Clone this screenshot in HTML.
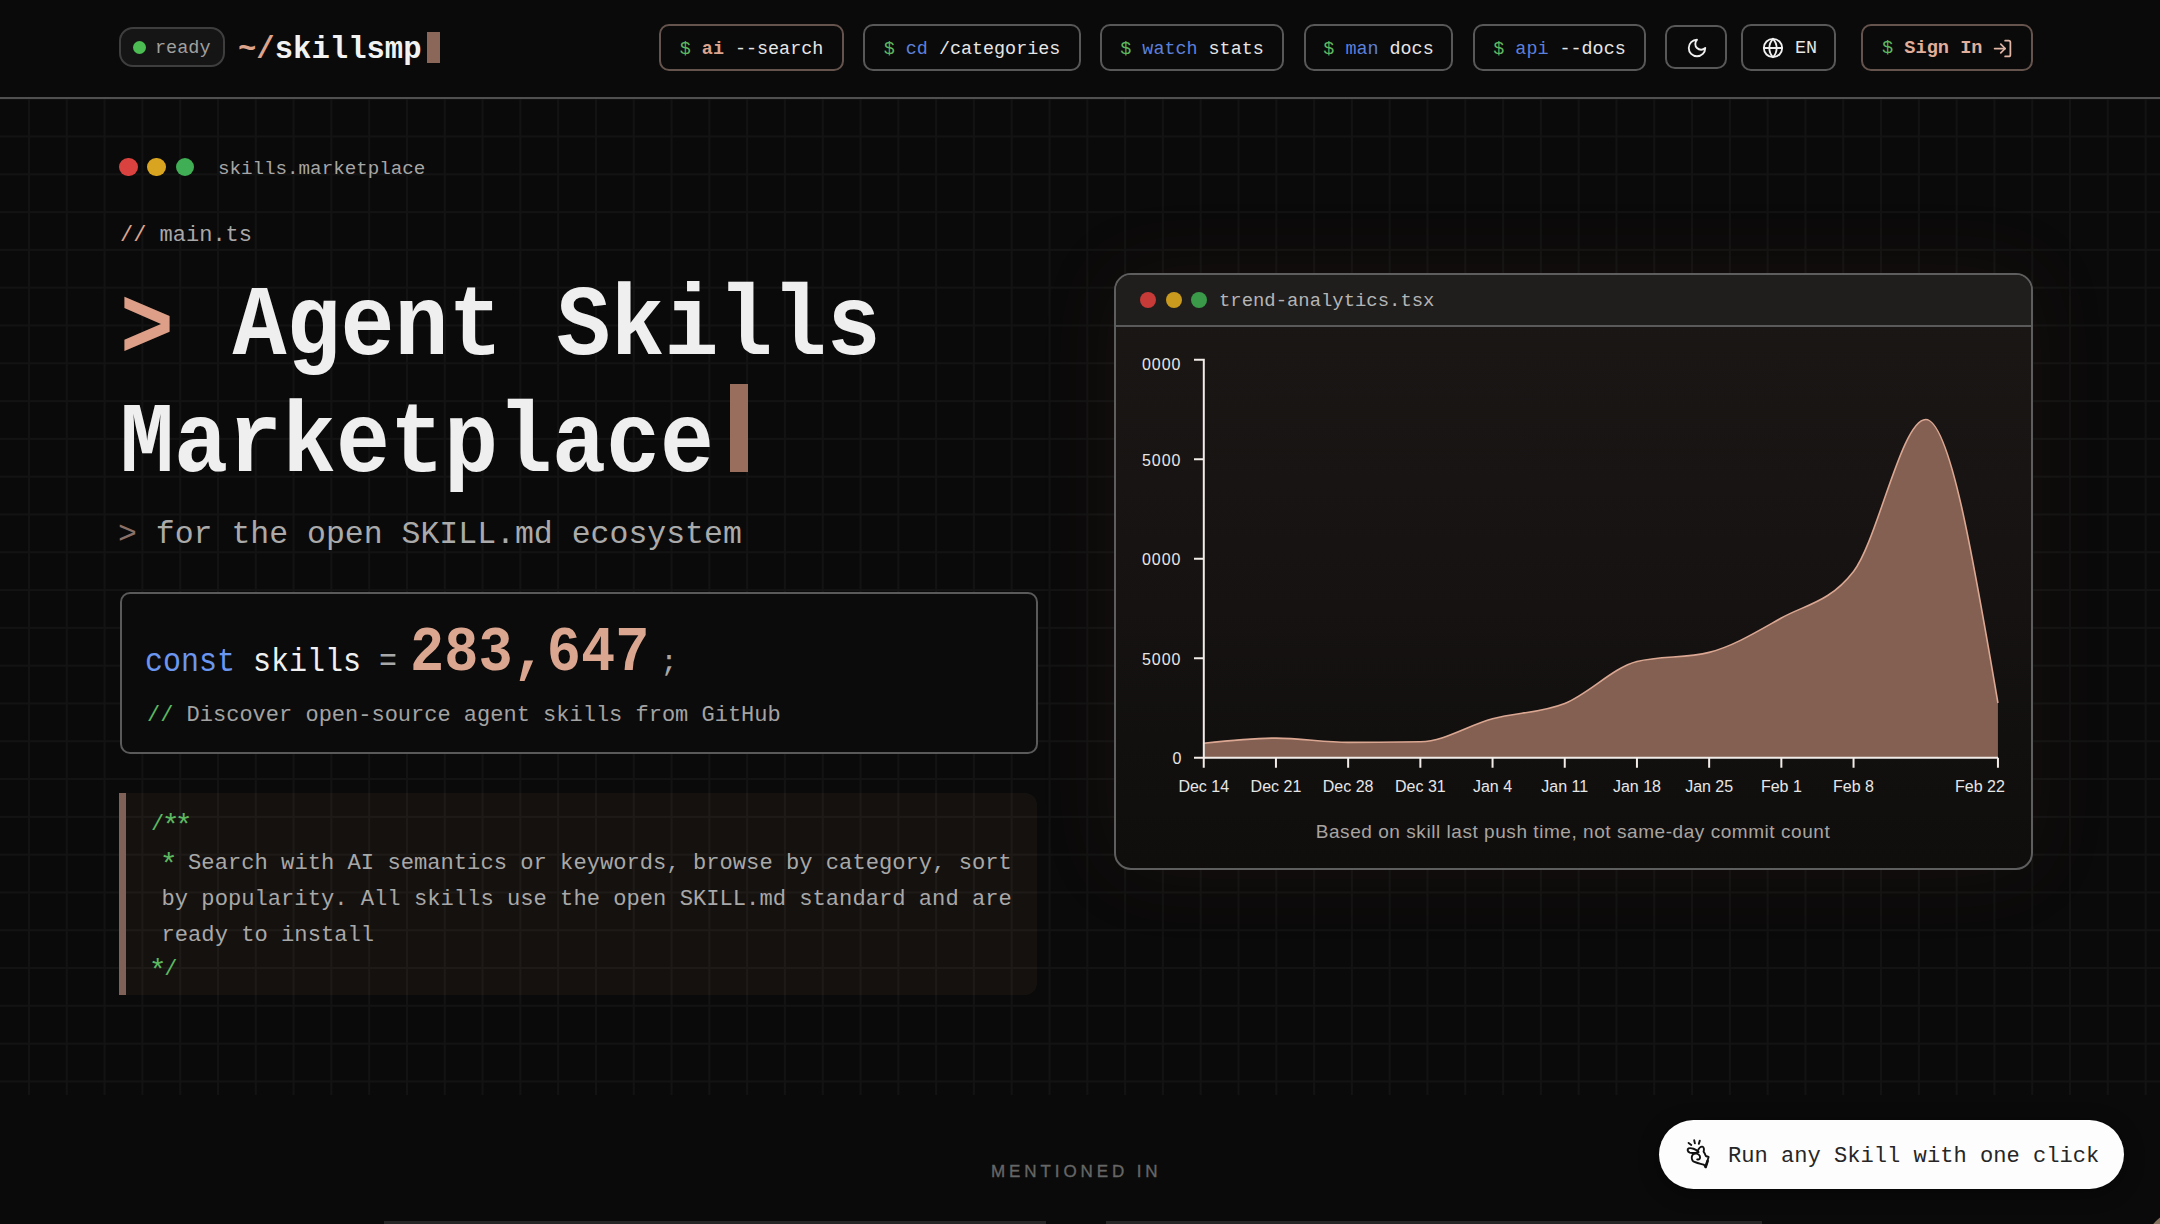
<!DOCTYPE html>
<html><head><meta charset="utf-8">
<style>
*{box-sizing:border-box;margin:0;padding:0}
html,body{width:2160px;height:1224px;overflow:hidden;background:#0b0a0a}
body{position:relative;font-family:"Liberation Mono",monospace;color:#eee}
.a{position:absolute;white-space:pre;line-height:1}
.sans{font-family:"Liberation Sans",sans-serif}
#grid{position:absolute;left:0;top:98px;width:2160px;height:997px;
 background-image:linear-gradient(to right,#131313 0,#131313 1.5px,transparent 1.5px),linear-gradient(to bottom,#131313 0,#131313 1.5px,transparent 1.5px);
 background-size:37.8px 37.8px;background-position:28px -0.3px}
#hdr{position:absolute;left:0;top:0;width:2160px;height:99px;background:#0b0a0a;border-bottom:2px solid #505050}
.btn{position:absolute;top:24px;height:46.5px;border:2px solid #585858;border-radius:10px;background:#0b0a0a}
.bt{position:absolute;font-size:18.4px;line-height:1;top:14.5px;left:0;right:0;text-align:center;white-space:pre;color:#e6e6e6}
.g{color:#5cb860}.ast{display:inline-block;transform:translateY(3px) scale(1.35)}.s{color:#dca48d}.b{color:#5b80dc}
</style></head><body>
<div id="grid"></div>
<div id="hdr">
  <div class="a" style="left:119px;top:27px;width:106px;height:40px;border:2px solid #3e3e3e;border-radius:14px;background:#161515"></div>
  <div class="a" style="left:133px;top:40.7px;width:13px;height:13px;border-radius:50%;background:#4bbd52"></div>
  <div class="a" style="left:155px;top:39.5px;font-size:18.5px;color:#a0a0a0">ready</div>
  <div class="a" style="left:238px;top:34.8px;font-size:30.6px;font-weight:bold;color:#f2f2f2"><span class="s">~/</span>skillsmp</div>
  <div class="a" style="left:427px;top:32px;width:13px;height:31px;background:#8a6758"></div>

  <div class="btn" style="left:659px;width:185px;border-color:#65544d"><div class="bt"><span class="g">$</span> <span class="s" style="font-weight:bold">ai</span> --search</div></div>
  <div class="btn" style="left:863px;width:218px"><div class="bt"><span class="g">$</span> <span class="b">cd</span> /categories</div></div>
  <div class="btn" style="left:1100px;width:184px"><div class="bt"><span class="g">$</span> <span class="b">watch</span> stats</div></div>
  <div class="btn" style="left:1304px;width:149px"><div class="bt"><span class="g">$</span> <span class="b">man</span> docs</div></div>
  <div class="btn" style="left:1473px;width:173px"><div class="bt"><span class="g">$</span> <span class="b">api</span> --docs</div></div>
  <div class="btn" style="left:1665px;width:62px;top:25px;height:44px">
    <svg style="position:absolute;left:19px;top:10px" width="22" height="22" viewBox="0 0 24 24" fill="none" stroke="#f0f0f0" stroke-width="2" stroke-linecap="round" stroke-linejoin="round"><path d="M12 3a6 6 0 0 0 9 9 9 9 0 1 1-9-9Z"/></svg>
  </div>
  <div class="btn" style="left:1741px;width:95px">
    <svg style="position:absolute;left:19px;top:11px" width="22" height="22" viewBox="0 0 24 24" fill="none" stroke="#f0f0f0" stroke-width="2" stroke-linecap="round" stroke-linejoin="round"><circle cx="12" cy="12" r="10"/><path d="M12 2a14.5 14.5 0 0 0 0 20 14.5 14.5 0 0 0 0-20"/><path d="M2 12h20"/></svg>
    <div class="a" style="left:52px;top:14.3px;font-size:18.4px;color:#e6e6e6">EN</div>
  </div>
  <div class="btn" style="left:1861px;width:172px;border-color:#65544d">
    <div class="a" style="left:19px;top:14.2px;font-size:18.6px;font-weight:bold"><span class="g" style="font-weight:normal">$</span> <span style="color:#e0ae9a">Sign In</span></div>
    <svg style="position:absolute;left:129px;top:12px" width="21" height="21" viewBox="0 0 24 24" fill="none" stroke="#e0b5a5" stroke-width="2" stroke-linecap="round" stroke-linejoin="round"><path d="M15 3h4a2 2 0 0 1 2 2v14a2 2 0 0 1-2 2h-4"/><polyline points="10 17 15 12 10 7"/><line x1="15" y1="12" x2="3" y2="12"/></svg>
  </div>
</div>

<!-- hero left -->
<div class="a" style="left:119px;top:157.5px;width:18.5px;height:18.5px;border-radius:50%;background:#d9423f"></div>
<div class="a" style="left:147.3px;top:157.5px;width:18.5px;height:18.5px;border-radius:50%;background:#d9a521"></div>
<div class="a" style="left:175.6px;top:157.5px;width:18.5px;height:18.5px;border-radius:50%;background:#3fae54"></div>
<div class="a" style="left:218px;top:159.6px;font-size:19.2px;color:#a6a6a6">skills.marketplace</div>

<div class="a" style="left:120px;top:224.6px;font-size:22px;color:#a8a8a8"><span class="s">//</span> main.ts</div>

<div class="a" style="left:120px;top:285.4px;font-size:90px;font-weight:bold;color:#efefef;transform-origin:0 69px;transform:scaleY(1.11)"><span class="s" style="position:relative;top:2.5px;color:#dd9f87">&gt;</span> <span style="position:relative;left:4.5px">Agent Skills</span></div>
<div class="a" style="left:120px;top:402px;font-size:90px;font-weight:bold;color:#efefef;transform-origin:0 69px;transform:scaleY(1.11)">Marketplace</div>
<div class="a" style="left:730px;top:384px;width:18px;height:88px;background:#9a6e5c"></div>

<div class="a" style="left:118px;top:519px;font-size:31.5px;color:#aaaaaa"><span style="color:#8a7068">&gt;</span> for the open SKILL.md ecosystem</div>

<!-- stats box -->
<div class="a" style="left:120px;top:592px;width:918px;height:162px;border:2px solid #5a5a5a;border-radius:10px;background:#0c0b0b"></div>
<div class="a" style="left:145px;top:648px;font-size:30px;color:#f0f0f0;transform-origin:0 23px;transform:scaleY(1.1)"><span style="color:#6b96f0">const</span> skills <span style="color:#a8a8a8">=</span></div>
<div class="a" style="left:410px;top:627.3px;font-size:57px;font-weight:bold;color:#dba690;transform-origin:0 43.7px;transform:scaleY(1.1)">283,647</div>
<div class="a" style="left:660px;top:648px;font-size:30px;color:#a8a8a8">;</div>
<div class="a" style="left:147px;top:704.5px;font-size:22px;color:#a3a3a3"><span class="g">//</span> Discover open-source agent skills from GitHub</div>

<!-- comment block -->
<div class="a" style="left:119px;top:792.5px;width:918px;height:202px;background:rgba(120,85,70,0.10);border-radius:0 12px 12px 0"></div>
<div class="a" style="left:119px;top:792.5px;width:6.5px;height:202px;background:#7f6157"></div>
<div class="a" style="left:151px;top:814.3px;font-size:22px;color:#5cb860">/<span class="ast">*</span><span class="ast">*</span></div>
<div class="a" style="left:161.5px;top:853.2px;font-size:22.15px;color:#a8a8a8"><span class="g ast">*</span> Search with AI semantics or keywords, browse by category, sort</div>
<div class="a" style="left:161.5px;top:889.2px;font-size:22.15px;color:#a8a8a8">by popularity. All skills use the open SKILL.md standard and are</div>
<div class="a" style="left:161.5px;top:925.2px;font-size:22.15px;color:#a8a8a8">ready to install</div>
<div class="a" style="left:151px;top:959.2px;font-size:22px;color:#5cb860"><span class="ast">*</span>/</div>

<!-- chart card -->
<div class="a" style="left:1114px;top:273px;width:919px;height:597px;border:2px solid #5e5e5e;border-radius:17px;overflow:hidden;background:linear-gradient(to bottom,#1b1715 0%,#181413 35%,#0f0e0d 100%);box-shadow:0 0 80px rgba(120,80,60,0.10)">
  <div style="position:absolute;left:0;top:0;right:0;height:52px;background:#1f1e1d;border-bottom:2px solid #5a5a5a"></div>
</div>
<div class="a" style="left:1140px;top:292px;width:16px;height:16px;border-radius:50%;background:#c63a37"></div>
<div class="a" style="left:1165.7px;top:292px;width:16px;height:16px;border-radius:50%;background:#c99a1e"></div>
<div class="a" style="left:1191px;top:292px;width:16px;height:16px;border-radius:50%;background:#3a9a4a"></div>
<div class="a" style="left:1219px;top:291.5px;font-size:18.9px;color:#b5b5b5">trend-analytics.tsx</div>

<svg class="a" style="left:0;top:0" width="2160" height="1224" viewBox="0 0 2160 1224">
  <path d="M1203.75,757.7 L1203.75,743.20 C1227.82,740.65 1251.88,738.10 1275.95,738.10 C1300.02,738.10 1324.08,742.40 1348.15,742.40 C1372.22,742.40 1396.28,742.20 1420.35,741.80 C1444.42,741.40 1468.48,725.20 1492.55,718.80 C1516.62,712.40 1540.68,712.95 1564.75,703.40 C1588.82,693.85 1612.88,667.57 1636.95,661.50 C1661.02,655.43 1685.08,658.47 1709.15,652.40 C1733.22,646.33 1757.28,631.50 1781.35,618.00 C1805.42,604.50 1829.48,602.47 1853.55,571.40 C1877.62,540.33 1901.68,419.50 1925.75,419.50 C1949.82,419.50 1973.88,561.25 1997.95,703.00 L1997.95,757.7 Z" fill="#836052"/>
  <path d="M1203.75,743.20 C1227.82,740.65 1251.88,738.10 1275.95,738.10 C1300.02,738.10 1324.08,742.40 1348.15,742.40 C1372.22,742.40 1396.28,742.20 1420.35,741.80 C1444.42,741.40 1468.48,725.20 1492.55,718.80 C1516.62,712.40 1540.68,712.95 1564.75,703.40 C1588.82,693.85 1612.88,667.57 1636.95,661.50 C1661.02,655.43 1685.08,658.47 1709.15,652.40 C1733.22,646.33 1757.28,631.50 1781.35,618.00 C1805.42,604.50 1829.48,602.47 1853.55,571.40 C1877.62,540.33 1901.68,419.50 1925.75,419.50 C1949.82,419.50 1973.88,561.25 1997.95,703.00" fill="none" stroke="#dba792" stroke-width="1.6"/>
  <g stroke="#f2ece8" stroke-width="2" fill="none">
    <path d="M1194,359.7 H1203.8 V758.5"/>
    <path d="M1194,459.3 H1203.8 M1194,558.8 H1203.8 M1194,658.3 H1203.8 M1194,757.7 H1998"/>
    <path d="M1203.75,757.7 v10 M1275.95,757.7 v10 M1348.15,757.7 v10 M1420.35,757.7 v10 M1492.55,757.7 v10 M1564.75,757.7 v10 M1636.95,757.7 v10 M1709.15,757.7 v10 M1781.35,757.7 v10 M1853.55,757.7 v10 M1997.95,757.7 v10"/>
  </g>
  <g font-family="Liberation Sans" font-size="16" fill="#e6e6e6">
    <text x="1181.5" y="370.2" text-anchor="end" letter-spacing="1">0000</text>
    <text x="1181.5" y="465.8" text-anchor="end" letter-spacing="1">5000</text>
    <text x="1181.5" y="565.3" text-anchor="end" letter-spacing="1">0000</text>
    <text x="1181.5" y="664.8" text-anchor="end" letter-spacing="1">5000</text>
    <text x="1181.5" y="764.2" text-anchor="end">0</text>
    <g text-anchor="middle">
    <text x="1203.75" y="792.2">Dec 14</text>
    <text x="1275.95" y="792.2">Dec 21</text>
    <text x="1348.15" y="792.2">Dec 28</text>
    <text x="1420.35" y="792.2">Dec 31</text>
    <text x="1492.55" y="792.2">Jan 4</text>
    <text x="1564.75" y="792.2">Jan 11</text>
    <text x="1636.95" y="792.2">Jan 18</text>
    <text x="1709.15" y="792.2">Jan 25</text>
    <text x="1781.35" y="792.2">Feb 1</text>
    <text x="1853.55" y="792.2">Feb 8</text>
    <text x="1980" y="792.2">Feb 22</text>
    </g>
  </g>
  <text x="1573" y="838" font-family="Liberation Sans" font-size="19" letter-spacing="0.55" fill="#a9a4a1" text-anchor="middle">Based on skill last push time, not same-day commit count</text>
</svg>

<!-- bottom -->
<div class="a sans" style="left:991px;top:1163.1px;font-size:17px;letter-spacing:3.9px;color:#666;-webkit-text-stroke:0.35px #666">MENTIONED IN</div>
<div class="a" style="left:384px;top:1221px;width:662px;height:3px;background:#262626"></div>
<div class="a" style="left:1106px;top:1221px;width:656px;height:3px;background:#262626"></div>

<div class="a" style="left:1659px;top:1119.5px;width:465px;height:69px;border-radius:35px;background:#fdfdfd;box-shadow:0 4px 20px rgba(0,0,0,0.4)"></div>
<svg class="a" style="left:1680px;top:1132px" width="36" height="40" viewBox="0 0 36 40" fill="none" stroke="#111" stroke-width="1.9" stroke-linecap="round" stroke-linejoin="round">
  <path d="M8.6,10.9 L11.3,12.9 M14.2,8.2 L14.9,11.4 M19.8,8.6 L18.8,11.9"/>
  <path d="M18.5,19.8 C16,17 11,15.6 8.6,16.4 C7,17.2 7.4,19.6 9.8,20.6 C12,21.4 15.5,20.8 18.5,20.3"/>
  <path d="M17.8,18.6 C19,16 20.6,14.4 22.3,14.6 C24,15 24.3,17.5 23.6,19.6 C24.6,21 25.2,22.4 25.8,24 L28.6,25 L27.4,29 L25.6,35 L23.8,32.6 C19.5,31.4 14.2,30.6 12.6,28.6 C11.2,26.6 11.6,23.4 13.2,22.2 C15.2,20.8 18.8,21.3 19.9,24.2 C20.6,26.4 19.2,28 17.2,27.4"/>
  <path d="M25.6,35 L27.6,29" stroke-width="2.6"/>
</svg>
<div class="a" style="left:1728px;top:1145.8px;font-size:22.1px;color:#262626">Run any Skill with one click</div>
<div class="a" style="left:2144px;top:1209px;width:82px;height:82px;border-radius:50%;background:#85725e"></div>
</body></html>
